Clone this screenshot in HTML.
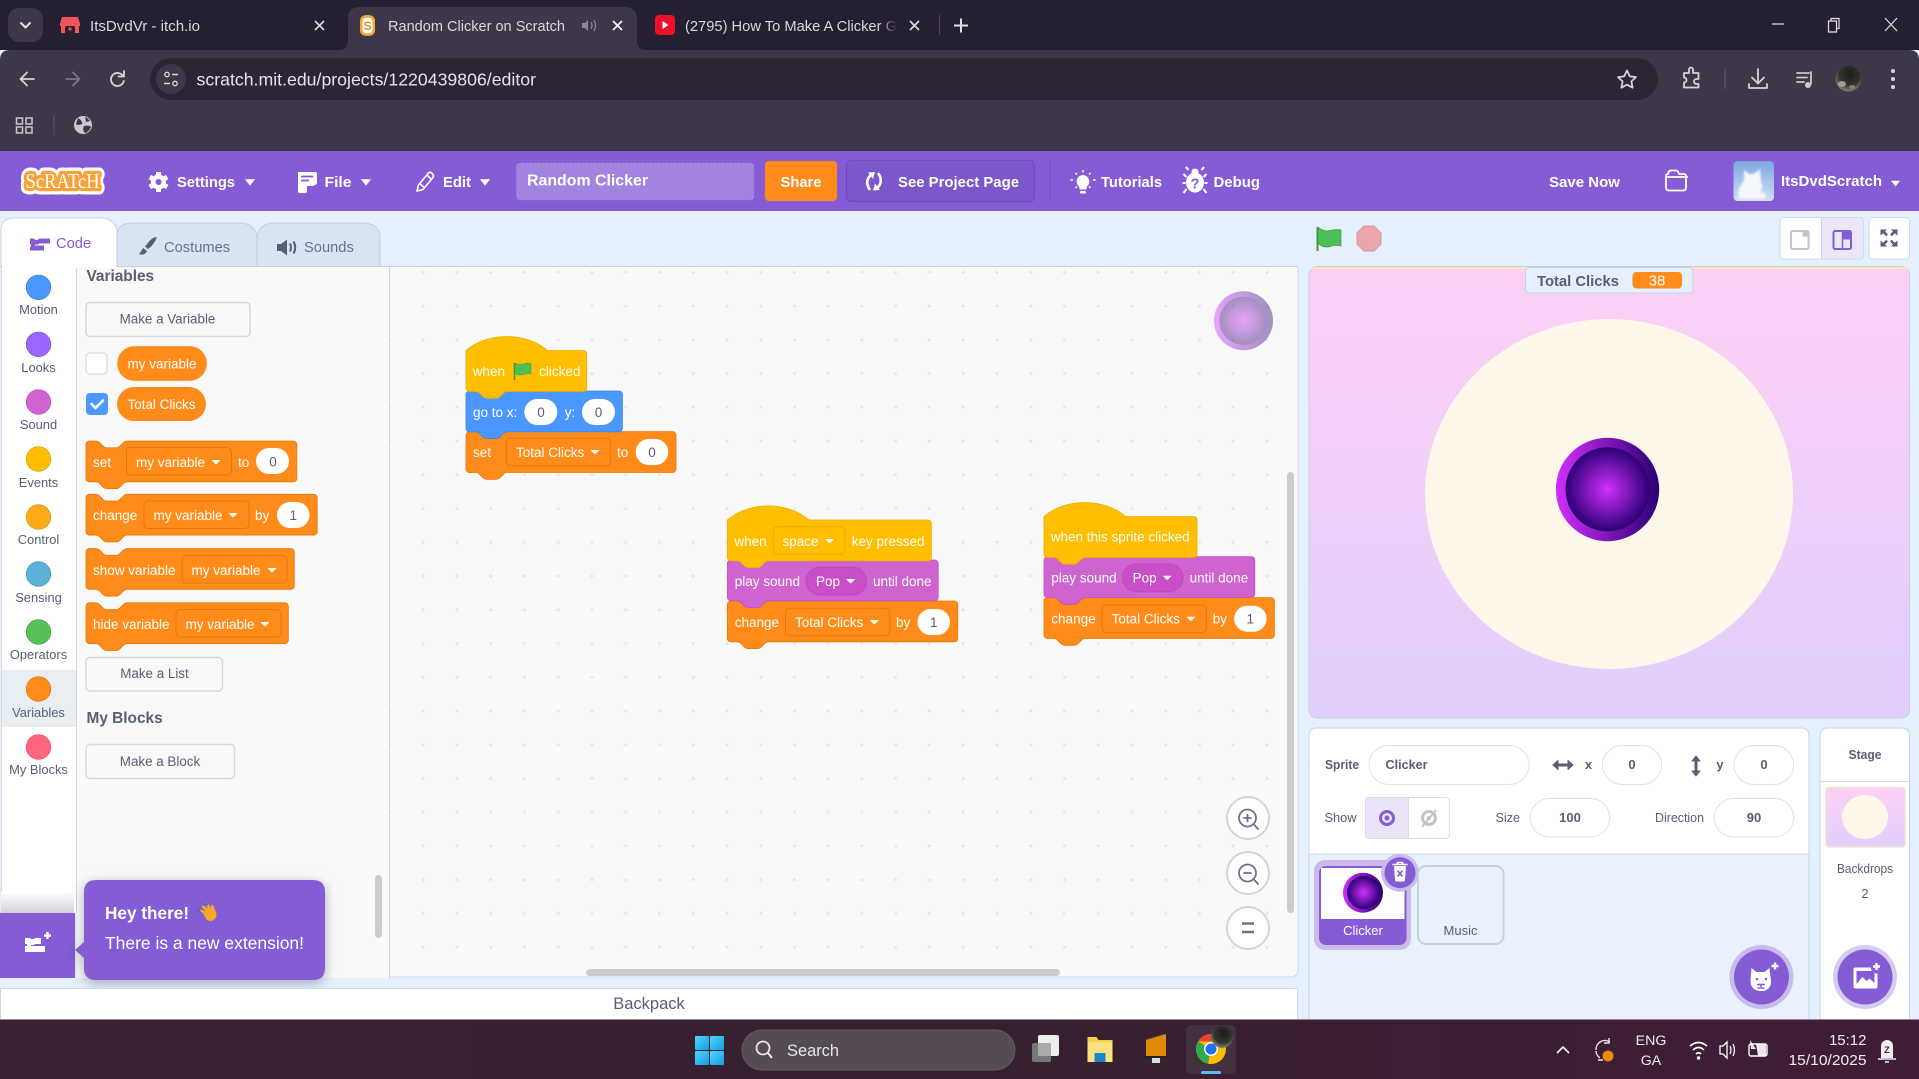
<!DOCTYPE html>
<html lang="en"><head><meta charset="utf-8"><title>Random Clicker on Scratch</title>
<style>
html,body{margin:0;padding:0;width:1919px;height:1079px;overflow:hidden;background:#e5f0ff}
svg{display:block}
text{font-family:"Liberation Sans",Arial,sans-serif}
.b{font-size:13.5px;fill:#fff}
.n{font-size:13.5px;fill:#575e75;text-anchor:middle}
.c{font-size:12.9px;fill:#575e75;text-anchor:middle}
.m{font-size:15px;font-weight:bold;fill:#fff}
.t{font-size:14.7px;fill:#d9d7dd}
.g{font-size:13px;fill:#575e75}
.bt{font-size:13.4px;fill:#575e75;text-anchor:middle}
.dd{fill:#ff8c1a;stroke:#e5780c;stroke-width:1}
.ov{fill:#fff}
.ic{fill:none;stroke:#c9c7cf;stroke-width:1.8;stroke-linecap:round;stroke-linejoin:round}
.box{fill:#fff;stroke:#dde1e8;stroke-width:1}
</style></head><body>
<svg width="1919" height="1079" viewBox="0 0 1919 1079" xmlns="http://www.w3.org/2000/svg">
<defs>
<pattern id="dots" x="0" y="0" width="33.75" height="33.75" patternUnits="userSpaceOnUse" patternTransform="translate(406.5 19.5)">
<rect x="16" y="15" width="1.5" height="3" fill="#e4e4e4"/><rect x="15.2" y="15.8" width="3" height="1.5" fill="#e4e4e4"/>
</pattern>
<linearGradient id="stg" x1="0" y1="0" x2="0" y2="1"><stop offset="0" stop-color="#fdd0f5"/><stop offset="1" stop-color="#e1cffd"/></linearGradient>
<linearGradient id="ring" x1="0" y1="0" x2="1" y2="0"><stop offset="0" stop-color="#d22eff"/><stop offset="1" stop-color="#2a0072"/></linearGradient>
<radialGradient id="core"><stop offset="0" stop-color="#d12fff"/><stop offset="1" stop-color="#2b0075"/></radialGradient>
<linearGradient id="tbg" x1="0" y1="0" x2="1" y2="0"><stop offset="0" stop-color="#3a2133"/><stop offset=".5" stop-color="#362030"/><stop offset="1" stop-color="#401d37"/></linearGradient>
<linearGradient id="fade" x1="0" y1="0" x2="0" y2="1"><stop offset="0" stop-color="#fff"/><stop offset="1" stop-color="#d6d2dc"/></linearGradient>
<linearGradient id="tabfade" x1="0" y1="0" x2="1" y2="0"><stop offset="0" stop-color="#251f32" stop-opacity="0"/><stop offset="1" stop-color="#251f32"/></linearGradient>
<linearGradient id="av" x1="0" y1="0" x2="0" y2="1"><stop offset="0" stop-color="#7ea6e0"/><stop offset="1" stop-color="#cfe0f5"/></linearGradient>
<linearGradient id="win" x1="0" y1="0" x2="1" y2="1"><stop offset="0" stop-color="#55d4f8"/><stop offset="1" stop-color="#0f9fe6"/></linearGradient>
<radialGradient id="cav" cx=".55" cy=".35" r=".75"><stop offset="0" stop-color="#1c1b18"/><stop offset=".55" stop-color="#34332c"/><stop offset="1" stop-color="#a5a398"/></radialGradient>
<filter id="shadow" x="-20%" y="-20%" width="140%" height="150%"><feDropShadow dx="0" dy="3" stdDeviation="6" flood-color="#000" flood-opacity=".3"/></filter>
<filter id="bl"><feGaussianBlur stdDeviation="1"/></filter>
<path id="caret" d="M-3.6,-2 h7.2 q.8,0 .3,.7 l-3.2,3.2 q-.7,.6 -1.4,0 l-3.2,-3.2 q-.5,-.7 .3,-.7z" fill="#fff"/>
</defs>

<!-- Chrome tab strip -->
<rect width="1919" height="50" fill="#251f32"/>
<rect x="8" y="8" width="35" height="34" rx="11" fill="#3e3749"/>
<path d="M21,23 l4.5,4.5 l4.5,-4.5" fill="none" stroke="#e2e0e6" stroke-width="2" stroke-linecap="round" stroke-linejoin="round"/>
<path d="M62,17 h16 l2,7 v2 h-1 v7 h-18 v-7 h-1 v-2z" fill="#f0555c"/><path d="M65,33 v-5 q0,-2 2,-2 h6 q2,0 2,2 v5z" fill="#2b2132"/><rect x="68.500" y="27.500" width="3" height="3" fill="#f0555c"/>
<text x="90" y="31" class="t" textLength="110" lengthAdjust="spacingAndGlyphs">ItsDvdVr - itch.io</text>
<path d="M315,21 l9,9 m0,-9 l-9,9" stroke="#d9d7dd" stroke-width="1.6" fill="none"/>
<path d="M338,50 q10,0 10,-9 V19 q0,-12 12,-12 H625 q12,0 12,12 V41 q0,9 10,9z" fill="#3e3749"/>
<path d="M360,21 q0,-6 7.500,-6 q7.500,0 7.500,6 v9 q0,6 -7.500,6 q-7.500,0 -7.500,-6z" fill="#f9a630"/><path d="M362.500,21.500 q0,-4 5,-4 q5,0 5,4 v8 q0,4 -5,4 q-5,0 -5,-4z" fill="#fff"/>
<text x="367.500" y="30" font-size="12" font-weight="bold" fill="#e8901a" text-anchor="middle">S</text>
<text x="388" y="31" class="t" textLength="177" lengthAdjust="spacingAndGlyphs">Random Clicker on Scratch</text>
<path d="M582,23 h3 l3,-3 v11 l-3,-3 h-3z" fill="#8b8794"/><path d="M591,22 q2,3.5 0,7 M594,20 q3,5.500 0,11" fill="none" stroke="#8b8794" stroke-width="1.2"/>
<path d="M613,21 l9,9 m0,-9 l-9,9" stroke="#f0eff2" stroke-width="1.8" fill="none"/>
<rect x="655" y="15" width="20" height="20" rx="4" fill="#ed0f2c"/><path d="M662.500,21 l6,4 l-6,4z" fill="#fff"/>
<text x="685" y="31" class="t" textLength="212" lengthAdjust="spacingAndGlyphs">(2795) How To Make A Clicker G</text>
<rect x="880" y="14" width="17" height="24" fill="url(#tabfade)"/><rect x="897" y="14" width="8" height="24" fill="#251f32"/>
<path d="M910,21 l9,9 m0,-9 l-9,9" stroke="#d9d7dd" stroke-width="1.8" fill="none"/>
<rect x="939" y="15" width="1" height="20" fill="#4c4658"/>
<path d="M954,25.500 h14 M961,18.500 v14" stroke="#e2e0e6" stroke-width="2" fill="none"/>
<path d="M1772,24 h12" stroke="#e2e0e6" stroke-width="1.2"/>
<path d="M1828.500,21 h8 v11 h-8z M1831,21 v-2.500 h8 v10 h-2.500" fill="none" stroke="#e2e0e6" stroke-width="1.2"/>
<path d="M1885,18 l12,13 m0,-13 l-12,13" stroke="#e2e0e6" stroke-width="1.200" fill="none"/>

<!-- Chrome toolbar -->
<path d="M0,151 V60 q0,-10 10,-10 H1909 q10,0 10,10 V151z" fill="#3e3749"/>
<rect x="0" y="150" width="1919" height="1.500" fill="#35303e"/>
<rect x="150" y="58" width="1508" height="42" rx="21" fill="#2b2536"/>
<path d="M34,79 H21 M27,72.500 L20.500,79 L27,85.500" class="ic" stroke-width="2" style="stroke:#d5d3da"/>
<path d="M66,79 H79 M73,72.500 L79.500,79 L73,85.500" class="ic" style="stroke:#7a7584"/>
<path d="M123,76 a6.500,6.500 0 1 0 .8,5" class="ic" style="stroke:#d5d3da"/><path d="M124,71 v5.500 h-5.500" class="ic" style="stroke:#d5d3da"/>
<circle cx="171" cy="79" r="15" fill="#3e3749"/>
<circle cx="167" cy="74.500" r="2.200" fill="none" stroke="#d9d7dd" stroke-width="1.300"/><path d="M172,74.500 h6 M164,83.500 h6" stroke="#d9d7dd" stroke-width="1.500"/><circle cx="175" cy="83.500" r="2.200" fill="none" stroke="#d9d7dd" stroke-width="1.300"/>
<text x="196.500" y="85.500" font-size="17.600" fill="#e6e4ea" textLength="339.500" lengthAdjust="spacingAndGlyphs">scratch.mit.edu/projects/1220439806/editor</text>
<path d="M1627,70.500 l2.700,5.800 l6.300,.8 l-4.600,4.300 l1.200,6.300 l-5.600,-3.100 l-5.600,3.100 l1.200,-6.300 l-4.600,-4.300 l6.300,-.8z" class="ic" style="stroke:#d5d3da"/>
<path d="M1684,73 h5 v-3.500 a2,2 0 0 1 4,0 v3.500 h5.500 v6 h-2 a2.500,2.500 0 0 0 0,5 h2 v3.500 h-14.500 v-5 a2.500,2.500 0 0 0 0,-5z" class="ic" style="stroke:#d5d3da"/>
<rect x="1724.500" y="69" width="1.200" height="20" fill="#5a5566"/>
<path d="M1758,69 v14 M1752,77.500 l6,6 l6,-6 M1749,84 v4 h18 v-4" class="ic" style="stroke:#d5d3da"/>
<path d="M1797,73 h12 M1797,77.500 h10 M1797,82 h7 M1811,72 v12" class="ic" style="stroke:#c9c7cf"/><circle cx="1808" cy="85" r="3" fill="#c9c7cf"/>
<circle cx="1848.500" cy="78.500" r="13" fill="url(#cav)"/><ellipse cx="1842" cy="84" rx="4" ry="3" fill="#b5b3a8" opacity=".8"/><ellipse cx="1852" cy="87" rx="3" ry="2" fill="#8d8b80" opacity=".8"/>
<circle cx="1893" cy="71" r="2" fill="#d5d3da"/><circle cx="1893" cy="79" r="2" fill="#d5d3da"/><circle cx="1893" cy="87" r="2" fill="#d5d3da"/>
<g fill="none" stroke="#c9c7cf" stroke-width="1.500"><rect x="16.500" y="118" width="6" height="6"/><rect x="26" y="118" width="6" height="6"/><rect x="16.500" y="127" width="6" height="6"/><rect x="26" y="127" width="6" height="6"/></g>
<rect x="53.500" y="115" width="1" height="20" fill="#5a5566"/>
<circle cx="83" cy="125" r="9" fill="#c9c7cf"/><path d="M78,118 q5,3 4,6 q-4,2 -6,0z M84,126 q5,-1 7,1 q-2,5 -6,6 q-3,-3 -1,-7z M85,117 q3,1 5,4 l-4,1z" fill="#3e3749"/>

<!-- Scratch menu -->
<rect y="151" width="1919" height="60" fill="#855cd6"/>
<text x="62.500" y="188" text-anchor="middle" style="font-family:'Liberation Serif',serif" font-size="21" font-weight="bold" fill="#fff" stroke="#fff" stroke-width="13" stroke-linejoin="round" textLength="74" lengthAdjust="spacingAndGlyphs">ScRATcH</text>
<text x="62.500" y="188" text-anchor="middle" style="font-family:'Liberation Serif',serif" font-size="21" font-weight="bold" fill="#f9a237" stroke="#f9a237" stroke-width="6.500" stroke-linejoin="round" textLength="74" lengthAdjust="spacingAndGlyphs">ScRATcH</text>
<text x="62.500" y="188" text-anchor="middle" style="font-family:'Liberation Serif',serif" font-size="21" fill="#fff" textLength="74" lengthAdjust="spacingAndGlyphs">ScRATcH</text>

<g transform="translate(158.500 182)"><circle r="7.500" fill="#fff"/><g stroke="#fff" stroke-width="5"><path d="M0,-10 V10"/><path d="M-8.700,-5 L8.700,5"/><path d="M-8.700,5 L8.700,-5"/></g><circle r="3" fill="#855cd6"/></g>
<text x="177" y="187.200" class="m" textLength="58" lengthAdjust="spacingAndGlyphs">Settings</text>
<path d="M245.500,179.500 h9 l-4.500,5.500z" fill="#fff" stroke="#fff" stroke-width=".6" stroke-linejoin="round"/>
<path d="M298,172 h17 q2,0 2,2 v10 l-4,2 h-6 v5 q0,2 -2,2 h-5 q-2,0 -2,-2z" fill="#fff"/><path d="M301,176.500 h12 M301,180.500 h8" stroke="#855cd6" stroke-width="1.800"/>
<text x="324.500" y="187.200" class="m" textLength="27" lengthAdjust="spacingAndGlyphs">File</text>
<path d="M361.500,179.500 h9 l-4.500,5.500z" fill="#fff" stroke="#fff" stroke-width=".6" stroke-linejoin="round"/>
<path d="M417,191 l1.500,-6 l10,-12 q1.500,-1.500 3,0 l1.500,1.500 q1,1.500 0,3 l-10,12z M420,184 l5,4 M427,175 l4,4" fill="none" stroke="#fff" stroke-width="1.600" stroke-linejoin="round"/>
<text x="443" y="187.200" class="m" textLength="28" lengthAdjust="spacingAndGlyphs">Edit</text>
<path d="M480.500,179.500 h9 l-4.500,5.500z" fill="#fff" stroke="#fff" stroke-width=".6" stroke-linejoin="round"/>
<rect x="516" y="162.500" width="238.500" height="38" rx="4" fill="#a283e0" stroke="#7c58c9" stroke-dasharray="2 2"/>
<text x="527" y="185.500" font-size="16" font-weight="bold" fill="#fff" textLength="121" lengthAdjust="spacingAndGlyphs">Random Clicker</text>
<rect x="765" y="161" width="72" height="40" rx="4" fill="#ff8c1a"/>
<text x="801" y="187" class="m" text-anchor="middle" textLength="41" lengthAdjust="spacingAndGlyphs">Share</text>
<rect x="846.500" y="160.500" width="188" height="41" rx="5" fill="#7c56cb" stroke="#6f4cbc"/>
<path d="M870,190 q-5,-7 -1,-13 l2,-2 M878,173 q5,7 1,13 l-2,2" fill="none" stroke="#fff" stroke-width="2.600"/>
<path d="M868,172.500 l7,-.5 l-2,7z M880,190 l-7,.5 l2,-7z" fill="#fff"/>
<text x="898" y="187.200" class="m" textLength="121" lengthAdjust="spacingAndGlyphs">See Project Page</text>
<rect x="1049.500" y="160" width="1" height="42" fill="#7752c4"/>
<path d="M1083,175 a6.500,6.500 0 0 1 4,11.500 l-.8,3 h-6.400 l-.8,-3 a6.500,6.500 0 0 1 4,-11.500z" fill="#fff"/><rect x="1080" y="191" width="6" height="2.500" rx="1" fill="#fff"/>
<path d="M1083,170 v2.500 M1073,180 h-2.500 M1095.500,180 h-2.500 M1075.500,173 l1.500,1.500 M1090.500,173 l-1.500,1.500 M1075.500,188 l1.500,-1.500 M1090.500,188 l-1.500,-1.500" stroke="#fff" stroke-width="1.500"/>
<text x="1101" y="187.200" class="m" textLength="61" lengthAdjust="spacingAndGlyphs">Tutorials</text>
<ellipse cx="1195" cy="182.500" rx="9" ry="10" fill="#fff"/><circle cx="1195" cy="172" r="3.500" fill="#fff"/>
<path d="M1188.500,170 l-2.500,-3 M1201.500,170 l2.500,-3 M1186.500,177 l-3,-3 M1203.500,177 l3,-3 M1185.500,183 h-3 M1204.500,183 h3 M1186.500,189 l-3,4 M1203.500,189 l3,4" stroke="#fff" stroke-width="2" fill="none"/>
<text x="1195" y="188.500" font-size="15" font-weight="bold" fill="#855cd6" text-anchor="middle">?</text>
<text x="1213.500" y="187.200" class="m" textLength="46.500" lengthAdjust="spacingAndGlyphs">Debug</text>
<text x="1549" y="187.200" class="m" textLength="71" lengthAdjust="spacingAndGlyphs">Save Now</text>
<path d="M1666,176 q0,-2 2,-2 l1,-2.500 q.5,-1 2,-1 h5 q1.500,0 2.500,2 l.5,1.500 h5 q1.500,0 2,1.500 v12 q0,3 -3,3 h-14 q-3,0 -3,-3z M1666,177 h22" fill="none" stroke="#fff" stroke-width="1.800"/>
<rect x="1733.500" y="161" width="40.500" height="40" rx="4" fill="url(#av)"/>
<g filter="url(#bl)" fill="#f4f7fc"><path d="M1744,170 l5,4 h5 l6,-5 l1,12 q3,7 -1,11 l5,1 q2,4 -2,6 h-24 q-3,-10 5,-18z"/></g>
<text x="1781" y="186" class="m" textLength="101" lengthAdjust="spacingAndGlyphs">ItsDvdScratch</text>
<path d="M1891.500,181 h8 l-4,5z" fill="#fff" stroke="#fff" stroke-width=".6" stroke-linejoin="round"/>

<!-- Editor tabs -->
<path d="M1,267 V230 q0,-12 14,-12 H100 q14,0 17,12 V267z" fill="#fff" stroke="#cdd6e3"/>
<path d="M117,267 V232 q3,-9 16,-9 H239 q16,0 18,14 V267z" fill="#d9e3f2" stroke="#c5cedb"/>
<path d="M257,267 V237 q2,-14 18,-14 H362 q17,0 18,14 V267z" fill="#d9e3f2" stroke="#c5cedb"/>
<path d="M30,238.500 h4 l1,1.500 h3 l1,-1.500 h11 v5 h-11 l-1,1 h-3 v1 h9 v5 h-14 v-4 h1 v-2 h-1z" fill="#855cd6"/>
<text x="56" y="248" font-size="14.700" fill="#855cd6">Code</text>
<path d="M157,237 q-5,0 -9,6 l-3,3.500 l3,2.500 q6,-4 9,-12z" fill="#575e75"/><path d="M143,248 l4,3 q-2,5 -8,3 q2,-2 4,-6z" fill="#575e75"/>
<text x="164" y="252" font-size="14.700" fill="#6b7188">Costumes</text>
<path d="M277,244 h4 l6,-4.500 v16 l-6,-4.500 h-4z" fill="#575e75"/><path d="M290,243.500 q2,4 0,8 M293.500,241.500 q3.500,6 0,12" fill="none" stroke="#575e75" stroke-width="2"/>
<text x="304" y="252" font-size="14.700" fill="#6b7188">Sounds</text>

<!-- Category column -->
<rect x="1" y="267" width="76" height="646" fill="#fff"/>
<rect x="1" y="267" width="1" height="646" fill="#d5dbe4"/>
<rect x="76" y="267" width="1" height="646" fill="#d0d5dc"/>
<rect x="2" y="670" width="74" height="57" fill="#e9eef2"/>
<circle cx="38.500" cy="287.300" r="12.300" fill="#4c97ff" stroke="#3373cc" stroke-width=".6"/><text x="38.500" y="314" class="c">Motion</text>
<circle cx="38.500" cy="344.300" r="12.300" fill="#9966ff" stroke="#774dcb" stroke-width=".6"/><text x="38.500" y="372" class="c">Looks</text>
<circle cx="38.500" cy="402" r="12.300" fill="#cf63cf" stroke="#bd42bd" stroke-width=".6"/><text x="38.500" y="429" class="c">Sound</text>
<circle cx="38.500" cy="459" r="12.300" fill="#ffbf00" stroke="#cc9900" stroke-width=".6"/><text x="38.500" y="487" class="c">Events</text>
<circle cx="38.500" cy="517" r="12.300" fill="#ffab19" stroke="#cf8b17" stroke-width=".6"/><text x="38.500" y="544" class="c">Control</text>
<circle cx="38.500" cy="574" r="12.300" fill="#5cb1d6" stroke="#2e8eb8" stroke-width=".6"/><text x="38.500" y="602" class="c">Sensing</text>
<circle cx="38.500" cy="632" r="12.300" fill="#59c059" stroke="#389438" stroke-width=".6"/><text x="38.500" y="659" class="c">Operators</text>
<circle cx="38.500" cy="689" r="12.300" fill="#ff8c1a" stroke="#db6e00" stroke-width=".6"/><text x="38.500" y="717" class="c">Variables</text>
<circle cx="38.500" cy="747" r="12.300" fill="#ff6680" stroke="#ff3355" stroke-width=".6"/><text x="38.500" y="774" class="c">My Blocks</text>

<!-- Flyout -->
<rect x="77" y="267" width="312" height="711" fill="#f9f9f9"/>
<rect x="389" y="267" width="1" height="711" fill="#cfd3d9"/>
<rect x="0" y="266" width="1298" height="1" fill="#c8d0dc"/>
<rect x="2" y="266" width="114" height="2" fill="#fff"/>
<text x="86.500" y="281" font-size="15.400" font-weight="bold" fill="#575e75">Variables</text>
<rect x="86" y="302.500" width="164" height="34" rx="4" fill="#f9f9f9" stroke="#d9d9d9" stroke-width="1.500"/>
<text x="167.500" y="323.700" class="bt">Make a Variable</text>
<rect x="86" y="353" width="21" height="21" rx="4" fill="#fff" stroke="#d9d9d9" stroke-width="1.200"/>
<rect x="117" y="346" width="90" height="35" rx="17.500" fill="#ff8c1a" stroke="#f0e2d2" stroke-width=".5"/>
<text x="127.500" y="368.300" class="b" textLength="69" lengthAdjust="spacingAndGlyphs">my variable</text>
<rect x="86" y="393" width="22" height="22" rx="4" fill="#4c97ff"/>
<path d="M91.500,404 l4,4 l7.500,-7.500" fill="none" stroke="#fff" stroke-width="2.600" stroke-linecap="round" stroke-linejoin="round"/>
<rect x="117" y="387" width="89" height="34" rx="17" fill="#ff8c1a"/>
<text x="127.500" y="409" class="b" textLength="68" lengthAdjust="spacingAndGlyphs">Total Clicks</text>

<!-- Flyout blocks -->
<g fill="#ff8c1a" stroke="#e5780c" stroke-width="1">
<path transform="translate(86 441) scale(.85)" d="M0,4 a4,4 0 0 1 4,-4 H12 c2,0 3,1 4,2 l4,4 c1,1 2,2 4,2 h12 c2,0 3,-1 4,-2 l4,-4 c1,-1 2,-2 4,-2 H244 a4,4 0 0 1 4,4 V44 a4,4 0 0 1 -4,4 H48 c-2,0 -3,1 -4,2 l-4,4 c-1,1 -2,2 -4,2 h-12 c-2,0 -3,-1 -4,-2 l-4,-4 c-1,-1 -2,-2 -4,-2 H4 a4,4 0 0 1 -4,-4 z"/>
<path transform="translate(86 494.300) scale(.85)" d="M0,4 a4,4 0 0 1 4,-4 H12 c2,0 3,1 4,2 l4,4 c1,1 2,2 4,2 h12 c2,0 3,-1 4,-2 l4,-4 c1,-1 2,-2 4,-2 H268 a4,4 0 0 1 4,4 V44 a4,4 0 0 1 -4,4 H48 c-2,0 -3,1 -4,2 l-4,4 c-1,1 -2,2 -4,2 h-12 c-2,0 -3,-1 -4,-2 l-4,-4 c-1,-1 -2,-2 -4,-2 H4 a4,4 0 0 1 -4,-4 z"/>
<path transform="translate(86 548.500) scale(.85)" d="M0,4 a4,4 0 0 1 4,-4 H12 c2,0 3,1 4,2 l4,4 c1,1 2,2 4,2 h12 c2,0 3,-1 4,-2 l4,-4 c1,-1 2,-2 4,-2 H241 a4,4 0 0 1 4,4 V44 a4,4 0 0 1 -4,4 H48 c-2,0 -3,1 -4,2 l-4,4 c-1,1 -2,2 -4,2 h-12 c-2,0 -3,-1 -4,-2 l-4,-4 c-1,-1 -2,-2 -4,-2 H4 a4,4 0 0 1 -4,-4 z"/>
<path transform="translate(86 602.800) scale(.85)" d="M0,4 a4,4 0 0 1 4,-4 H12 c2,0 3,1 4,2 l4,4 c1,1 2,2 4,2 h12 c2,0 3,-1 4,-2 l4,-4 c1,-1 2,-2 4,-2 H234 a4,4 0 0 1 4,4 V44 a4,4 0 0 1 -4,4 H48 c-2,0 -3,1 -4,2 l-4,4 c-1,1 -2,2 -4,2 h-12 c-2,0 -3,-1 -4,-2 l-4,-4 c-1,-1 -2,-2 -4,-2 H4 a4,4 0 0 1 -4,-4 z"/>
</g>
<text x="93" y="467" class="b">set</text>
<rect class="dd" x="126.500" y="447.500" width="105" height="27.500" rx="4"/><text x="136" y="467" class="b">my variable</text><use href="#caret" x="216" y="462"/>
<text x="238" y="467" class="b">to</text><rect class="ov" x="256" y="448" width="33" height="26" rx="13"/><text x="273" y="466.500" class="n">0</text>
<text x="93" y="520" class="b">change</text>
<rect class="dd" x="144" y="501" width="105" height="27.500" rx="4"/><text x="153.500" y="520" class="b">my variable</text><use href="#caret" x="233" y="515"/>
<text x="255" y="520" class="b">by</text><rect class="ov" x="277" y="502" width="32.500" height="26" rx="13"/><text x="293.300" y="520" class="n">1</text>
<text x="93" y="575" class="b">show variable</text>
<rect class="dd" x="182" y="555.500" width="105" height="27.500" rx="4"/><text x="191.500" y="575" class="b">my variable</text><use href="#caret" x="272" y="570"/>
<text x="93" y="629" class="b">hide variable</text>
<rect class="dd" x="176" y="609.500" width="105" height="27.500" rx="4"/><text x="185.500" y="629" class="b">my variable</text><use href="#caret" x="265" y="624"/>

<rect x="86" y="657.500" width="136.500" height="33.500" rx="4" fill="#f9f9f9" stroke="#d9d9d9" stroke-width="1.500"/><text x="154.500" y="678" class="bt">Make a List</text>
<text x="86.500" y="723" font-size="15.400" font-weight="bold" fill="#575e75">My Blocks</text>
<rect x="86" y="744.500" width="148.500" height="34" rx="4" fill="#f9f9f9" stroke="#d9d9d9" stroke-width="1.500"/><text x="160" y="766" class="bt">Make a Block</text>
<rect x="375" y="875" width="7" height="63" rx="3.500" fill="#ccc"/>

<!-- Workspace -->
<path d="M390,267 H1298 V969 q0,8 -8,8 H390z" fill="#f9f9f9"/>
<path d="M390,267 H1298 V969 q0,8 -8,8 H390z" fill="url(#dots)"/>
<path d="M1298,267 V969 q0,8 -8,8 H390" fill="none" stroke="#cfd6e2"/>
<rect x="1287" y="472" width="7" height="441" rx="3.500" fill="#ccc"/>
<rect x="586" y="969" width="474" height="7" rx="3.500" fill="#ccc"/>

<g opacity=".42"><circle cx="1243.500" cy="320.700" r="29.500" fill="url(#ring)"/><circle cx="1243.500" cy="320.700" r="24" fill="url(#core)"/></g>

<!-- Script 1 -->
<path transform="translate(466 431.700) scale(.85)" fill="#ff8c1a" stroke="#e5780c" d="M0,4 a4,4 0 0 1 4,-4 H12 c2,0 3,1 4,2 l4,4 c1,1 2,2 4,2 h12 c2,0 3,-1 4,-2 l4,-4 c1,-1 2,-2 4,-2 H243 a4,4 0 0 1 4,4 V44 a4,4 0 0 1 -4,4 H48 c-2,0 -3,1 -4,2 l-4,4 c-1,1 -2,2 -4,2 h-12 c-2,0 -3,-1 -4,-2 l-4,-4 c-1,-1 -2,-2 -4,-2 H4 a4,4 0 0 1 -4,-4 z"/>
<path transform="translate(466 391) scale(.85)" fill="#4c97ff" stroke="#3f85e6" d="M0,4 a4,4 0 0 1 4,-4 H12 c2,0 3,1 4,2 l4,4 c1,1 2,2 4,2 h12 c2,0 3,-1 4,-2 l4,-4 c1,-1 2,-2 4,-2 H180 a4,4 0 0 1 4,4 V44 a4,4 0 0 1 -4,4 H48 c-2,0 -3,1 -4,2 l-4,4 c-1,1 -2,2 -4,2 h-12 c-2,0 -3,-1 -4,-2 l-4,-4 c-1,-1 -2,-2 -4,-2 H4 a4,4 0 0 1 -4,-4 z"/>
<path transform="translate(466 337) scale(.85)" fill="#ffbf00" stroke="#eeb000" d="M0,16 c25,-22 71,-22 96,0 H138 a4,4 0 0 1 4,4 V60 a4,4 0 0 1 -4,4 H48 c-2,0 -3,1 -4,2 l-4,4 c-1,1 -2,2 -4,2 h-12 c-2,0 -3,-1 -4,-2 l-4,-4 c-1,-1 -2,-2 -4,-2 H4 a4,4 0 0 1 -4,-4 z"/>
<text x="472.700" y="376" class="b">when</text>
<path d="M514.500,363 v17" stroke="#3d9a3d" stroke-width="1.600"/>
<path d="M515,363 q4,2.500 8,1 q4,-1.500 8,-.5 v10.500 q-4,-1 -8,.5 q-4,1.500 -8,-1z" fill="#4cbf56" stroke="#45993d" stroke-width=".5"/>
<text x="539" y="376" class="b" textLength="41.500" lengthAdjust="spacingAndGlyphs">clicked</text>
<text x="473" y="417" class="b">go to x:</text><rect class="ov" x="524.300" y="399" width="33" height="26" rx="13"/><text x="541" y="417" class="n">0</text>
<text x="564.700" y="417" class="b">y:</text><rect class="ov" x="582" y="399" width="33" height="26" rx="13"/><text x="598.500" y="417" class="n">0</text>
<text x="473" y="457" class="b">set</text>
<rect class="dd" x="506.300" y="438.300" width="104.400" height="27.400" rx="4"/><text x="516" y="457" class="b">Total Clicks</text><use href="#caret" x="595" y="452"/>
<text x="617" y="457" class="b">to</text><rect class="ov" x="635.700" y="439" width="32.600" height="26" rx="13"/><text x="652" y="457" class="n">0</text>

<!-- Script 2 -->
<path transform="translate(727.400 601) scale(.85)" fill="#ff8c1a" stroke="#e5780c" d="M0,4 a4,4 0 0 1 4,-4 H12 c2,0 3,1 4,2 l4,4 c1,1 2,2 4,2 h12 c2,0 3,-1 4,-2 l4,-4 c1,-1 2,-2 4,-2 H267 a4,4 0 0 1 4,4 V44 a4,4 0 0 1 -4,4 H48 c-2,0 -3,1 -4,2 l-4,4 c-1,1 -2,2 -4,2 h-12 c-2,0 -3,-1 -4,-2 l-4,-4 c-1,-1 -2,-2 -4,-2 H4 a4,4 0 0 1 -4,-4 z"/>
<path transform="translate(727.400 560) scale(.85)" fill="#cf63cf" stroke="#c553c5" d="M0,4 a4,4 0 0 1 4,-4 H12 c2,0 3,1 4,2 l4,4 c1,1 2,2 4,2 h12 c2,0 3,-1 4,-2 l4,-4 c1,-1 2,-2 4,-2 H244 a4,4 0 0 1 4,4 V44 a4,4 0 0 1 -4,4 H48 c-2,0 -3,1 -4,2 l-4,4 c-1,1 -2,2 -4,2 h-12 c-2,0 -3,-1 -4,-2 l-4,-4 c-1,-1 -2,-2 -4,-2 H4 a4,4 0 0 1 -4,-4 z"/>
<path transform="translate(727.400 506.400) scale(.85)" fill="#ffbf00" stroke="#eeb000" d="M0,16 c25,-22 71,-22 96,0 H236 a4,4 0 0 1 4,4 V60 a4,4 0 0 1 -4,4 H48 c-2,0 -3,1 -4,2 l-4,4 c-1,1 -2,2 -4,2 h-12 c-2,0 -3,-1 -4,-2 l-4,-4 c-1,-1 -2,-2 -4,-2 H4 a4,4 0 0 1 -4,-4 z"/>
<text x="734.400" y="546" class="b">when</text>
<rect x="773.300" y="526.700" width="71.700" height="27.600" rx="4" fill="#ffbf00" stroke="#e6ac00"/><text x="782.500" y="546" class="b">space</text><use href="#caret" x="829.500" y="541"/>
<text x="851.700" y="546" class="b">key pressed</text>
<text x="734.700" y="586" class="b">play sound</text>
<rect x="806" y="567.300" width="60.500" height="27.700" rx="13.800" fill="#c94fc9" stroke="#c047c0"/><text x="816" y="586" class="b">Pop</text><use href="#caret" x="850.600" y="581"/>
<text x="873" y="586" class="b">until done</text>
<text x="734.700" y="627" class="b">change</text>
<rect class="dd" x="785.500" y="608.300" width="104.300" height="27.400" rx="4"/><text x="795" y="627" class="b">Total Clicks</text><use href="#caret" x="874.300" y="622"/>
<text x="896" y="627" class="b">by</text><rect class="ov" x="917.500" y="609" width="32.500" height="26" rx="13"/><text x="933.700" y="627" class="n">1</text>

<!-- Script 3 -->
<path transform="translate(1044 597.700) scale(.85)" fill="#ff8c1a" stroke="#e5780c" d="M0,4 a4,4 0 0 1 4,-4 H12 c2,0 3,1 4,2 l4,4 c1,1 2,2 4,2 h12 c2,0 3,-1 4,-2 l4,-4 c1,-1 2,-2 4,-2 H267 a4,4 0 0 1 4,4 V44 a4,4 0 0 1 -4,4 H48 c-2,0 -3,1 -4,2 l-4,4 c-1,1 -2,2 -4,2 h-12 c-2,0 -3,-1 -4,-2 l-4,-4 c-1,-1 -2,-2 -4,-2 H4 a4,4 0 0 1 -4,-4 z"/>
<path transform="translate(1044 556.700) scale(.85)" fill="#cf63cf" stroke="#c553c5" d="M0,4 a4,4 0 0 1 4,-4 H12 c2,0 3,1 4,2 l4,4 c1,1 2,2 4,2 h12 c2,0 3,-1 4,-2 l4,-4 c1,-1 2,-2 4,-2 H244 a4,4 0 0 1 4,4 V44 a4,4 0 0 1 -4,4 H48 c-2,0 -3,1 -4,2 l-4,4 c-1,1 -2,2 -4,2 h-12 c-2,0 -3,-1 -4,-2 l-4,-4 c-1,-1 -2,-2 -4,-2 H4 a4,4 0 0 1 -4,-4 z"/>
<path transform="translate(1044 503) scale(.85)" fill="#ffbf00" stroke="#eeb000" d="M0,16 c25,-22 71,-22 96,0 H176 a4,4 0 0 1 4,4 V60 a4,4 0 0 1 -4,4 H48 c-2,0 -3,1 -4,2 l-4,4 c-1,1 -2,2 -4,2 h-12 c-2,0 -3,-1 -4,-2 l-4,-4 c-1,-1 -2,-2 -4,-2 H4 a4,4 0 0 1 -4,-4 z"/>
<text x="1050.700" y="541.700" class="b" textLength="139" lengthAdjust="spacingAndGlyphs">when this sprite clicked</text>
<text x="1051.300" y="582.700" class="b">play sound</text>
<rect x="1122.600" y="564" width="60.500" height="27.700" rx="13.800" fill="#c94fc9" stroke="#c047c0"/><text x="1132.600" y="582.700" class="b">Pop</text><use href="#caret" x="1167.200" y="577.700"/>
<text x="1189.600" y="582.700" class="b">until done</text>
<text x="1051.300" y="623.700" class="b">change</text>
<rect class="dd" x="1102.100" y="605" width="104.300" height="27.400" rx="4"/><text x="1111.600" y="623.700" class="b">Total Clicks</text><use href="#caret" x="1190.900" y="618.700"/>
<text x="1212.600" y="623.700" class="b">by</text><rect class="ov" x="1234.100" y="605.700" width="32.500" height="26" rx="13"/><text x="1250.300" y="623.700" class="n">1</text>

<!-- Zoom buttons -->
<g fill="#fff" stroke="#d5d5d5" stroke-width="2"><circle cx="1248" cy="818" r="21"/><circle cx="1248" cy="873" r="21"/><circle cx="1248" cy="928" r="21"/></g>
<g fill="none" stroke="#6c7189" stroke-width="1.800" stroke-linecap="round">
<circle cx="1247.500" cy="818" r="8.500"/><path d="M1253.700,824.200 l4.300,4.800 M1244,818 h7 M1247.500,814.500 v7"/>
<circle cx="1247.500" cy="873" r="8.500"/><path d="M1253.700,879.200 l4.300,4.800 M1244,873 h7"/>
</g>
<path d="M1242,923.500 h12 M1242,932 h12" stroke="#6c7189" stroke-width="2.400" stroke-linecap="butt"/>

<!-- Extension button + tooltip -->
<rect x="1" y="892" width="73" height="21" fill="url(#fade)"/>
<rect y="913" width="75" height="65" fill="#855cd6"/>
<path d="M25,938 h5 l1,1 h3 l1,-1 h6 v6 h-6 l-1,1 h-3 v1 h14 v6 h-20 v-6 h2 v-2 h-2z" fill="#fff"/>
<path d="M47.500,932 v7 M44,935.500 h7" stroke="#fff" stroke-width="2.400"/>
<g filter="url(#shadow)"><path d="M96,880 H313 q12,0 12,12 V968 q0,12 -12,12 H96 q-12,0 -12,-12 V958 l-9,-8 l9,-8 V892 q0,-12 12,-12z" fill="#855cd6"/></g>
<text x="105" y="919" font-size="17.200" font-weight="bold" fill="#fff">Hey there!</text>
<g transform="translate(199 904) rotate(-28 9 10)"><path d="M5,7 l-1.500,-2.500 a1.300,1.300 0 0 1 2.200,-1.200 l2.800,3.500 l-1.500,-5 a1.300,1.300 0 0 1 2.500,-.7 l2,4.500 l0,-4 a1.300,1.300 0 0 1 2.600,.2 l.5,4.700 l.7,-2 a1.200,1.200 0 0 1 2.300,.6 l-.6,6.500 q-.8,6 -6,6.300 q-4,.2 -6,-3.500z" fill="#f7a72a"/></g>
<path d="M197,912 q1,-3 3,-4 M199,915 q1,-2 2,-3 M204,905 q2,-1 4,0" fill="none" stroke="#3a6fd0" stroke-width="1.300"/>
<text x="105" y="949" font-size="17.100" fill="#fff" textLength="199" lengthAdjust="spacingAndGlyphs">There is a new extension!</text>

<!-- Backpack -->
<rect x=".5" y="988.500" width="1297" height="32" fill="#fff" stroke="#d0d8e5"/>
<text x="649" y="1009" font-size="16.500" fill="#575e75" text-anchor="middle">Backpack</text>

<!-- Stage controls -->
<path d="M1317.500,227 V251" stroke="#3d9a3d" stroke-width="2"/>
<path d="M1318,227 q5,5 12,3.500 q6,-1.500 11,-.5 v16 q-6,-1.500 -11,.5 q-7,2 -12,-3.500z" fill="#4cbf56" stroke="#45993d" stroke-width=".7"/>
<path d="M1364,226 h10 l7,7 v11 l-7,7 h-10 l-7,-7 v-11z" fill="#eca6ab" stroke="#dc9499" stroke-linejoin="round"/>
<rect x="1780" y="217.500" width="83.500" height="41.500" rx="4" fill="#fff" stroke="#d0d9e8"/>
<path d="M1821.500,217.500 h38 q4,0 4,4 v33.500 q0,4 -4,4 h-38z" fill="#ece6f9" stroke="#d0d9e8"/>
<rect x="1791" y="231" width="17.500" height="18" rx="1.500" fill="none" stroke="#c4c4c4" stroke-width="2"/><rect x="1802.500" y="231" width="6" height="5.500" fill="#c4c4c4"/>
<rect x="1833.500" y="231" width="17.500" height="18" rx="1.500" fill="none" stroke="#855cd6" stroke-width="2"/><rect x="1842.500" y="231" width="8.500" height="8.500" fill="#855cd6"/><path d="M1842.500,231 v18" stroke="#855cd6" stroke-width="1.500"/>
<rect x="1869" y="217.500" width="40.500" height="41.500" rx="4" fill="#fff" stroke="#d0d9e8"/>
<g fill="#575e75" transform="translate(-1.500 -.5)"><path d="M1882,230 h6.500 l-2,2 l3,3 l-1.800,1.800 l-3,-3 l-2.700,2.200z"/><path d="M1899,230 h-6.500 l2,2 l-3,3 l1.800,1.800 l3,-3 l2.700,2.200z"/><path d="M1882,247 h6.500 l-2,-2 l3,-3 l-1.800,-1.800 l-3,3 l-2.700,-2.200z"/><path d="M1899,247 h-6.500 l2,-2 l-3,-3 l1.800,-1.800 l3,3 l2.700,-2.200z"/></g>

<!-- Stage -->
<rect x="1309" y="266.500" width="600.500" height="451.500" rx="8" fill="url(#stg)" stroke="#c5d0e3"/>
<path d="M1310,269 q1,-2 7,-2 H1902 q6,0 7,2z" fill="#fde6be"/>
<ellipse cx="1609" cy="494" rx="184" ry="175" fill="#fff8ea"/>
<circle cx="1607.500" cy="489.500" r="51.700" fill="url(#ring)"/>
<circle cx="1607.500" cy="489.300" r="42" fill="url(#core)"/>
<rect x="1525.500" y="267.500" width="167.500" height="25.500" rx="4" fill="#e5f0ff" stroke="#c8d3e2"/>
<text x="1537" y="286" font-size="15" font-weight="bold" fill="#575e75" textLength="82" lengthAdjust="spacingAndGlyphs">Total Clicks</text>
<rect x="1632.500" y="272" width="49.500" height="16.500" rx="4" fill="#ff8c1a"/>
<text x="1657" y="285.500" font-size="15" fill="#fff" text-anchor="middle">38</text>

<!-- Sprite panel -->
<path d="M1309,1020 V736 q0,-8 8,-8 H1801 q8,0 8,8 V1020z" fill="#fff" stroke="#c8d4e6"/>
<path d="M1309.500,854.500 H1808.500 V1020 H1309.500z" fill="#e9f1fc"/>
<rect x="1309.500" y="853.500" width="499" height="1.200" fill="#d9dde3"/>
<text x="1325" y="769" font-size="13" font-weight="bold" fill="#575e75" textLength="34" lengthAdjust="spacingAndGlyphs">Sprite</text>
<rect class="box" x="1369" y="745.500" width="160" height="39" rx="19.500"/>
<text x="1385.500" y="769" font-size="13" font-weight="bold" fill="#575e75" textLength="42" lengthAdjust="spacingAndGlyphs">Clicker</text>
<path d="M1557,765 h12" stroke="#575e75" stroke-width="3"/><path d="M1553,765 l5,-4.500 v9z M1573,765 l-5,-4.500 v9z" fill="#575e75" stroke="#575e75" stroke-linejoin="round"/>
<text x="1588.500" y="769" font-size="13" font-weight="bold" fill="#575e75" text-anchor="middle">x</text>
<rect class="box" x="1602.500" y="745.500" width="59" height="39" rx="19.500"/>
<text x="1632" y="769" class="g" text-anchor="middle" font-weight="bold">0</text>
<path d="M1696,760 v12" stroke="#575e75" stroke-width="3"/><path d="M1696,756 l-4,5 h8z M1696,776 l-4,-5 h8z" fill="#575e75" stroke="#575e75" stroke-linejoin="round"/>
<text x="1720" y="769" font-size="13" font-weight="bold" fill="#575e75" text-anchor="middle">y</text>
<rect class="box" x="1734" y="745.500" width="59.500" height="39" rx="19.500"/>
<text x="1764" y="769" class="g" text-anchor="middle" font-weight="bold">0</text>
<text x="1324.500" y="822" class="g" textLength="32" lengthAdjust="spacingAndGlyphs">Show</text>
<rect x="1365.500" y="797.500" width="84" height="41" rx="4" fill="#fff" stroke="#d9dde3"/>
<path d="M1365.500,801.500 q0,-4 4,-4 H1408.500 V838.500 H1369.500 q-4,0 -4,-4z" fill="#ebe4f9" stroke="#d9dde3"/>
<circle cx="1387" cy="818" r="6.500" fill="none" stroke="#855cd6" stroke-width="3"/><circle cx="1387" cy="818" r="2.500" fill="#855cd6"/>
<circle cx="1429" cy="818" r="6.500" fill="none" stroke="#c4c4c4" stroke-width="3"/><circle cx="1429" cy="818" r="2.200" fill="#c4c4c4"/><path d="M1422,827 l14,-17" stroke="#c4c4c4" stroke-width="2"/>
<text x="1495.500" y="822" class="g" textLength="24.500" lengthAdjust="spacingAndGlyphs">Size</text>
<rect class="box" x="1530.500" y="798.500" width="79" height="38.500" rx="19"/>
<text x="1570" y="822" class="g" text-anchor="middle" font-weight="bold">100</text>
<text x="1655" y="822" class="g" textLength="49" lengthAdjust="spacingAndGlyphs">Direction</text>
<rect class="box" x="1714.500" y="798.500" width="79" height="38.500" rx="19"/>
<text x="1754" y="822" class="g" text-anchor="middle" font-weight="bold">90</text>

<!-- Sprite tile -->
<rect x="1314" y="860" width="97" height="90" rx="11" fill="#c9bcec"/>
<rect x="1319" y="866" width="87.500" height="79" rx="7" fill="#855cd6"/>
<rect x="1321" y="868" width="83.500" height="51" fill="#fff"/>
<circle cx="1363" cy="892.700" r="20" fill="url(#ring)"/><circle cx="1363.500" cy="892.500" r="16.500" fill="url(#core)"/>
<text x="1363" y="935" font-size="13" fill="#fff" text-anchor="middle">Clicker</text>
<circle cx="1400" cy="872.700" r="19" fill="#c9bcec"/><circle cx="1400" cy="872.700" r="15.500" fill="#855cd6"/>
<path d="M1394,866 h12 l-1,14 q0,1.500 -1.500,1.500 h-7 q-1.500,0 -1.500,-1.500z" fill="#fff"/><path d="M1392.500,864.500 h15 M1397.500,864 v-1.500 h5 v1.500" fill="none" stroke="#fff" stroke-width="1.600"/>
<path d="M1397.500,870.500 l5,6 m0,-6 l-5,6" stroke="#855cd6" stroke-width="1.500"/>
<rect x="1418" y="866" width="85.500" height="78" rx="8" fill="#e9f1fc" stroke="#c8d0de" stroke-width="2"/>
<text x="1460.500" y="935" font-size="13" fill="#575e75" text-anchor="middle">Music</text>

<circle cx="1761.500" cy="977" r="32" fill="#c9bcec"/><circle cx="1761.500" cy="977" r="27.500" fill="#855cd6"/>
<path d="M1751.500,968 l5,4 h8 l5,-4 l1.500,13 q0,10 -10,10 q-10,0 -10.500,-10z" fill="#fff"/>
<path d="M1757,979 v0 M1766,979 v0" stroke="#855cd6" stroke-width="2.500" stroke-linecap="round"/><path d="M1757,984.500 h8 M1761,984.500 v2.500 M1757.500,988 h7" stroke="#855cd6" stroke-width="1.500"/>
<path d="M1771.500,966 h7 M1775,962.500 v7" stroke="#fff" stroke-width="2.400"/>

<!-- Stage selector -->
<path d="M1820,1020 V736 q0,-8 8,-8 H1901 q8.500,0 8.500,8 V1020z" fill="#fff" stroke="#c8d4e6"/>
<rect x="1820.500" y="781" width="88.500" height="1" fill="#d9dde3"/>
<text x="1865" y="759" font-size="13" font-weight="bold" fill="#575e75" text-anchor="middle" textLength="33" lengthAdjust="spacingAndGlyphs">Stage</text>
<rect x="1826" y="787.500" width="79" height="59.500" rx="3" fill="url(#stg)" stroke="#f0e2d3" stroke-width="1.500"/>
<ellipse cx="1865" cy="817" rx="23" ry="22" fill="#fff8ea"/>
<text x="1865" y="873" font-size="12.500" fill="#575e75" text-anchor="middle" textLength="56" lengthAdjust="spacingAndGlyphs">Backdrops</text>
<text x="1865" y="898" font-size="13" fill="#575e75" text-anchor="middle">2</text>
<circle cx="1865" cy="977" r="32" fill="#d6ccf1"/><circle cx="1865" cy="977" r="27.500" fill="#855cd6"/>
<path d="M1855.500,967.500 h20 q2,0 2,2 v17 q0,2 -2,2 h-20 q-2,0 -2,-2 v-17 q0,-2 2,-2z" fill="#fff"/>
<path d="M1856.500,984 l6,-7 l4,4 l3,-2.500 l5,4.500 v-12 h-18z" fill="#855cd6"/>
<circle cx="1876.500" cy="968" r="5.500" fill="#855cd6"/>
<path d="M1873,966.500 h7 M1876.500,963 v7" stroke="#fff" stroke-width="2.400"/>

<!-- Taskbar -->
<rect y="1020" width="1919" height="59" fill="url(#tbg)"/>
<rect y="1019" width="1919" height="1" fill="#8f8a92"/>
<g fill="url(#win)"><rect x="695" y="1036" width="14" height="14" rx="1"/><rect x="710" y="1036" width="14" height="14" rx="1"/><rect x="695" y="1051" width="14" height="14" rx="1"/><rect x="710" y="1051" width="14" height="14" rx="1"/></g>
<rect x="742" y="1030" width="273" height="40" rx="20" fill="#544b53" stroke="#645c63"/>
<circle cx="763" cy="1048" r="6.500" fill="none" stroke="#e8e6e8" stroke-width="1.800"/><path d="M768,1053 l4,5" stroke="#e8e6e8" stroke-width="2"/>
<text x="787" y="1056" font-size="16.500" fill="#e8e6e8" textLength="52" lengthAdjust="spacingAndGlyphs">Search</text>
<rect x="1032" y="1043" width="19" height="19" rx="2" fill="#777"/><rect x="1038" y="1035" width="21" height="21" rx="2" fill="#eeeeee"/><rect x="1038" y="1043" width="13" height="13" fill="#aaa"/>
<path d="M1087.500,1037 h9 l2,3 h14 v22 h-25z" fill="#f6cf55"/><rect x="1087.500" y="1042" width="25" height="20" fill="#fbe27d"/><rect x="1094.500" y="1053" width="11" height="9" fill="#1a86d0"/>
<path d="M1146,1040 l20,-6 v22 h-20z" fill="#e58a08"/><path d="M1146,1040 l20,-6 h-4 l-17,5z" fill="#444"/><path d="M1142,1056 h24 v2 h-24z" fill="#222"/><path d="M1152,1058 h8 v5 h-8z" fill="#ddd"/>
<rect x="1186" y="1025" width="50" height="49" rx="5" fill="#43313f"/>
<circle cx="1211" cy="1049" r="15" fill="#fbbc04"/>
<path d="M1211,1049 m-13,-7.500 A15,15 0 0 1 1224,1041.500 H1211z" fill="#ea4335"/>
<path d="M1198,1041.500 A15,15 0 0 0 1208,1063.700 L1211,1049z" fill="#34a853"/>
<circle cx="1211" cy="1049" r="7" fill="#fff"/><circle cx="1211" cy="1049" r="5.500" fill="#1a73e8"/>
<circle cx="1222" cy="1037" r="11" fill="url(#cav)"/>
<rect x="1201" y="1071" width="20" height="3" rx="1.500" fill="#55bdf0"/>
<path d="M1557,1053 l6,-6 l6,6" fill="none" stroke="#fff" stroke-width="1.600"/>
<path d="M1596,1050 a9,9 0 0 1 14,-8 M1609,1038 v5 h-5 M1600,1058 a9,9 0 0 1 -4,-7 M1598,1060 h5" fill="none" stroke="#e8e6e8" stroke-width="1.400"/><circle cx="1608" cy="1056" r="5.500" fill="#f18a00"/>
<text x="1651" y="1045" font-size="14.200" fill="#f0eef0" text-anchor="middle">ENG</text>
<text x="1651" y="1065" font-size="14.200" fill="#f0eef0" text-anchor="middle">GA</text>
<path d="M1690,1046 q8.500,-7 17,0 M1693,1050 q5.500,-5 11,0 M1696,1054 q2.500,-2.500 5,0" fill="none" stroke="#fff" stroke-width="1.600"/><circle cx="1698.500" cy="1058" r="1.700" fill="#fff"/>
<path d="M1720,1046 h3 l4,-4 v16 l-4,-4 h-3z" fill="none" stroke="#fff" stroke-width="1.300"/><path d="M1730,1046 q2,4 0,8 M1733,1044 q3,6 0,12" fill="none" stroke="#fff" stroke-width="1.300"/>
<rect x="1749" y="1044" width="18" height="12" rx="2" fill="none" stroke="#fff" stroke-width="1.400"/><path d="M1750,1040 l6,9 h-5z M1756,1044 h10 v12 h-8z" fill="#fff" opacity=".9"/>
<text x="1866.500" y="1045" font-size="15" fill="#f0eef0" text-anchor="end">15:12</text>
<text x="1866.500" y="1065" font-size="15" fill="#f0eef0" text-anchor="end" textLength="78" lengthAdjust="spacingAndGlyphs">15/10/2025</text>
<path d="M1881,1058 v-12 a6,6 0 0 1 12,0 v12z" fill="#f0eef0"/><path d="M1878,1059 h18 M1885,1062 h4" stroke="#f0eef0" stroke-width="1.600"/><text x="1887" y="1053" font-size="9" font-weight="bold" fill="#3f1d36" text-anchor="middle">Z</text>
</svg>
</body></html>
